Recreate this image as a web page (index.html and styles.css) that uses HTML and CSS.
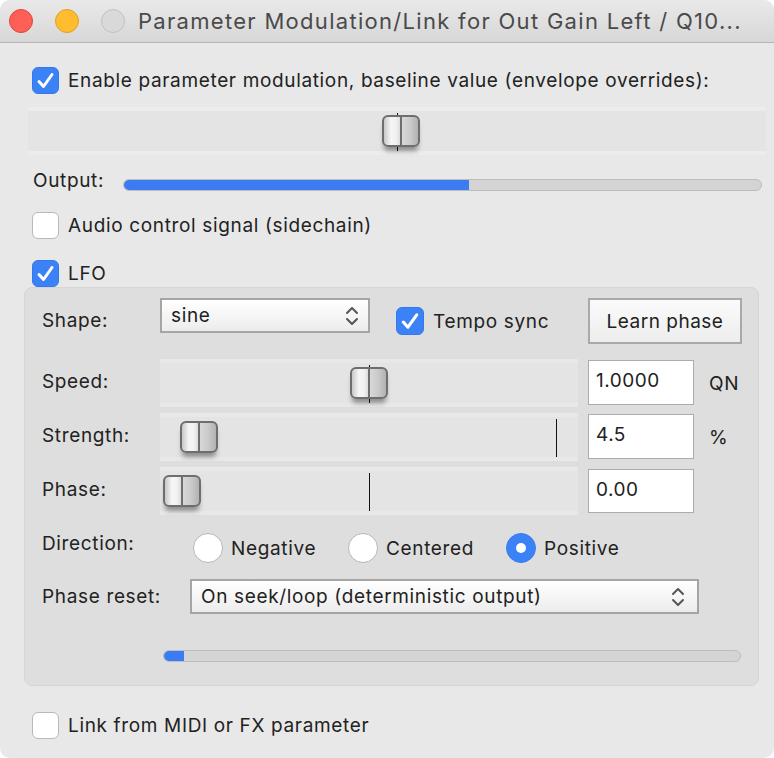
FILE: index.html
```html
<!DOCTYPE html>
<html>
<head>
<meta charset="utf-8">
<title>Parameter Modulation</title>
<link rel="stylesheet" href="styles.css">
</head>
<body>
<div class="window">
  <div class="titlebar">
    <div class="lights">
      <span class="light red"></span>
      <span class="light yellow"></span>
      <span class="light gray"></span>
    </div>
    <div class="title">Parameter Modulation/Link for Out Gain Left / Q10...</div>
  </div>

  <div class="content">
    <div class="check row-enable">
      <span class="box on"><svg viewBox="0 0 27 27" width="27" height="27"><path d="M7 14.5 L11.5 19.5 L20 7.5" fill="none" stroke="#fff" stroke-width="3" stroke-linecap="round" stroke-linejoin="round"/></svg></span>
      <span class="lbl">Enable parameter modulation, baseline value (envelope overrides):</span>
    </div>

    <div class="track main-track">
      <span class="tick" style="left:369px"></span>
      <span class="thumb" style="left:354px"></span>
    </div>

    <div class="output-row">
      <span class="lbl out-lbl">Output:</span>
      <div class="bar out-bar"><div class="fill" style="width:345px"></div></div>
    </div>

    <div class="check row-audio">
      <span class="box"></span>
      <span class="lbl">Audio control signal (sidechain)</span>
    </div>

    <div class="check row-lfo">
      <span class="box on"><svg viewBox="0 0 27 27" width="27" height="27"><path d="M7 14.5 L11.5 19.5 L20 7.5" fill="none" stroke="#fff" stroke-width="3" stroke-linecap="round" stroke-linejoin="round"/></svg></span>
      <span class="lbl">LFO</span>
    </div>

    <div class="group">
      <div class="shape-row">
        <span class="lbl col-lbl shape-lbl">Shape:</span>
        <div class="select shape-select">
          <span class="sel-text">sine</span>
          <svg class="chev" viewBox="0 0 14 24" width="14" height="24"><path d="M2 9 L7 4 L12 9 M2 15 L7 20 L12 15" fill="none" stroke="#555" stroke-width="2" stroke-linecap="round" stroke-linejoin="round"/></svg>
        </div>
        <span class="box on tempo-box"><svg viewBox="0 0 27 27" width="28" height="28"><path d="M7 14.5 L11.5 19.5 L20 7.5" fill="none" stroke="#fff" stroke-width="3" stroke-linecap="round" stroke-linejoin="round"/></svg></span>
        <span class="lbl tempo-lbl">Tempo sync</span>
        <div class="button">Learn phase</div>
      </div>

      <div class="slider-row first">
        <span class="lbl col-lbl">Speed:</span>
        <div class="track lfo-track">
          <span class="tick" style="left:209px"></span>
          <span class="thumb" style="left:190px"></span>
        </div>
        <div class="field">1.0000</div>
        <span class="lbl unit">QN</span>
      </div>

      <div class="slider-row">
        <span class="lbl col-lbl">Strength:</span>
        <div class="track lfo-track">
          <span class="tick" style="left:396px"></span>
          <span class="thumb" style="left:20px"></span>
        </div>
        <div class="field">4.5</div>
        <span class="lbl unit">%</span>
      </div>

      <div class="slider-row">
        <span class="lbl col-lbl">Phase:</span>
        <div class="track lfo-track">
          <span class="tick" style="left:209px"></span>
          <span class="thumb" style="left:3px"></span>
        </div>
        <div class="field field-low">0.00</div>
      </div>

      <div class="dir-row">
        <span class="lbl dir-lbl">Direction:</span>
        <div class="radio-item neg"><span class="radio"></span><span class="lbl">Negative</span></div>
        <div class="radio-item cen"><span class="radio"></span><span class="lbl">Centered</span></div>
        <div class="radio-item"><span class="radio on"></span><span class="lbl">Positive</span></div>
      </div>

      <div class="reset-row">
        <span class="lbl reset-lbl">Phase reset:</span>
        <div class="select reset-select">
          <span class="sel-text">On seek/loop (deterministic output)</span>
          <svg class="chev" viewBox="0 0 14 24" width="14" height="24"><path d="M2 9 L7 4 L12 9 M2 15 L7 20 L12 15" fill="none" stroke="#555" stroke-width="2" stroke-linecap="round" stroke-linejoin="round"/></svg>
        </div>
      </div>

      <div class="bar lfo-bar"><div class="fill" style="width:20px"></div></div>
    </div>

    <div class="check row-link">
      <span class="box"></span>
      <span class="lbl">Link from MIDI or FX parameter</span>
    </div>
  </div>
</div>
</body>
</html>
```

FILE: styles.css
```css
html, body {
  margin: 0;
  padding: 0;
  background: #ffffff;
}
body {
  font-family: Inter, "Liberation Sans", Arial, sans-serif;
  color: #222222;
}
.window {
  width: 774px;
  height: 758px;
  background: #e8e8e8;
  border-radius: 10px;
  overflow: hidden;
  box-sizing: border-box;
}
.titlebar {
  height: 42px;
  background: linear-gradient(#e9e9e9, #d7d7d7);
  border-bottom: 1px solid #b6b6b6;
  display: flex;
  align-items: center;
}
.lights {
  display: flex;
  gap: 22px;
  margin-left: 9px;
}
.light {
  width: 24px;
  height: 24px;
  border-radius: 50%;
  box-sizing: border-box;
}
.light.red { background: #fe5f57; border: 1px solid #e0443e; }
.light.yellow { background: #febc2e; border: 1px solid #dea123; }
.light.gray { background: #d9d9d9; border: 1px solid #c1c1c1; }
.title {
  margin-left: 13px;
  font-size: 22px;
  letter-spacing: 1.3px;
  color: #4a4a4a;
  white-space: nowrap;
}
.content {
  display: flex;
  flex-direction: column;
  align-items: flex-start;
}
.lbl {
  font-size: 19px;
  letter-spacing: 0.65px;
  white-space: nowrap;
}
.check {
  display: flex;
  align-items: center;
  margin-left: 32px;
  height: 27px;
}
.check .lbl { margin-left: 9px; }
.box {
  width: 27px;
  height: 27px;
  box-sizing: border-box;
  border-radius: 6px;
  background: #ffffff;
  border: 1px solid #b9b9b9;
  flex: none;
  display: block;
}
.box.on {
  background: #3b82f6;
  border: 1px solid #3478ee;
}
.box svg { display: block; margin: -1px; }
.row-enable { margin-top: 24px; }
.row-audio { margin-top: 17px; }
.row-lfo { margin-top: 21px; }
.row-link { margin-top: 26px; }

.track {
  position: relative;
  height: 48px;
  box-sizing: border-box;
  border-top: 4px solid #ececec;
  border-bottom: 4px solid #ececec;
  background: #e4e4e4;
}
.main-track {
  margin-top: 13px;
  margin-left: 28px;
  width: 738px;
}
.tick {
  position: absolute;
  top: 2px;
  width: 1px;
  height: 38px;
  background: #111;
}
.thumb {
  position: absolute;
  top: 4px;
  width: 38px;
  height: 32px;
  box-sizing: border-box;
  border: 2px solid #6e6e6e;
  border-radius: 6px;
  background: linear-gradient(90deg, #c8c8c8 0, #f6f6f6 7px, #f2f2f2 12px, #dcdcdc 16px, #6e6e6e 16px, #6e6e6e 18px, #d8d8d8 18px, #cacaca 26px, #b2b2b2 34px);
  box-shadow: 0 6px 5px -2px rgba(0,0,0,0.38);
}

.output-row {
  display: flex;
  align-items: center;
  height: 24px;
  margin-top: 16px;
  margin-left: 33px;
}
.out-lbl { width: 90px; margin-bottom: 5px; }
.bar {
  height: 12px;
  box-sizing: border-box;
  border: 1px solid #bdbdbd;
  border-radius: 6px;
  background: #d4d4d4;
  overflow: hidden;
}
.fill {
  height: 100%;
  background: #3b7cf2;
}
.out-bar { width: 639px; margin-top: 3px; }

.group {
  margin-left: 24px;
  width: 735px;
  height: 399px;
  box-sizing: border-box;
  background: #dedede;
  border: 1px solid #d5d5d5;
  border-radius: 8px;
  padding: 10px 16px 0 17px;
  display: flex;
  flex-direction: column;
}
.col-lbl { width: 118px; flex: none; }
.shape-row {
  display: flex;
  align-items: center;
  height: 46px;
}
.shape-lbl { margin-bottom: 2px; }
.select {
  box-sizing: border-box;
  border: 2px solid #a5a5a5;
  background: linear-gradient(#ffffff, #f6f6f6 50%, #ececec);
  display: flex;
  align-items: center;
  justify-content: space-between;
  padding: 0 12px 0 9px;
}
.sel-text { font-size: 19px; letter-spacing: 0.65px; white-space: nowrap; }
.chev { display: block; }
.shape-select {
  width: 210px;
  height: 35px;
  align-self: flex-start;
  padding-right: 9px;
}
.tempo-box {
  width: 28px;
  height: 28px;
  margin-left: 26px;
}
.tempo-lbl { margin-left: 9px; }
.button {
  margin-left: auto;
  width: 154px;
  height: 46px;
  box-sizing: border-box;
  border: 2px solid #a9a9a9;
  background: linear-gradient(#fbfbfb, #ededed);
  font-size: 19px;
  letter-spacing: 0.5px;
  display: flex;
  align-items: center;
  justify-content: center;
}
.slider-row {
  display: flex;
  align-items: center;
  height: 48px;
  margin-top: 6px;
}
.slider-row .col-lbl { margin-bottom: 4px; }
.slider-row.first { margin-top: 15px; }
.lfo-track {
  width: 418px;
  flex: none;
  border-top-color: #e8e8e8;
  border-bottom-color: #e8e8e8;
}
.field {
  align-self: flex-start;
  margin-top: 1px;
  margin-left: 10px;
  width: 106px;
  height: 45px;
  box-sizing: border-box;
  border: 1px solid #acacac;
  background: #ffffff;
  font-size: 19px;
  letter-spacing: 0.5px;
  padding: 8px 0 0 7px;
}
.field-low { margin-top: 2px; height: 44px; }
.unit { margin-left: 15px; }

.dir-row {
  display: flex;
  align-items: center;
  height: 30px;
  margin-top: 18px;
}
.dir-lbl { width: 151px; flex: none; margin-top: -10px; }
.radio-item {
  display: flex;
  align-items: center;
}
.radio-item .lbl { margin-left: 8px; }
.neg { width: 155px; }
.cen { width: 158px; }
.radio {
  width: 30px;
  height: 30px;
  box-sizing: border-box;
  border-radius: 50%;
  background: #ffffff;
  border: 1px solid #b7b7b7;
  flex: none;
  position: relative;
}
.radio.on {
  background: #3b82f6;
  border-color: #3a7cf0;
}
.radio.on::after {
  content: "";
  position: absolute;
  left: 9px;
  top: 9px;
  width: 10px;
  height: 10px;
  border-radius: 50%;
  background: #ffffff;
}

.reset-row {
  display: flex;
  align-items: center;
  height: 35px;
  margin-top: 16px;
}
.reset-lbl { width: 148px; flex: none; }
.reset-select {
  width: 509px;
  height: 35px;
  padding-right: 12px;
}
.lfo-bar {
  margin-top: 36px;
  margin-left: 121px;
  width: 578px;
}
```
